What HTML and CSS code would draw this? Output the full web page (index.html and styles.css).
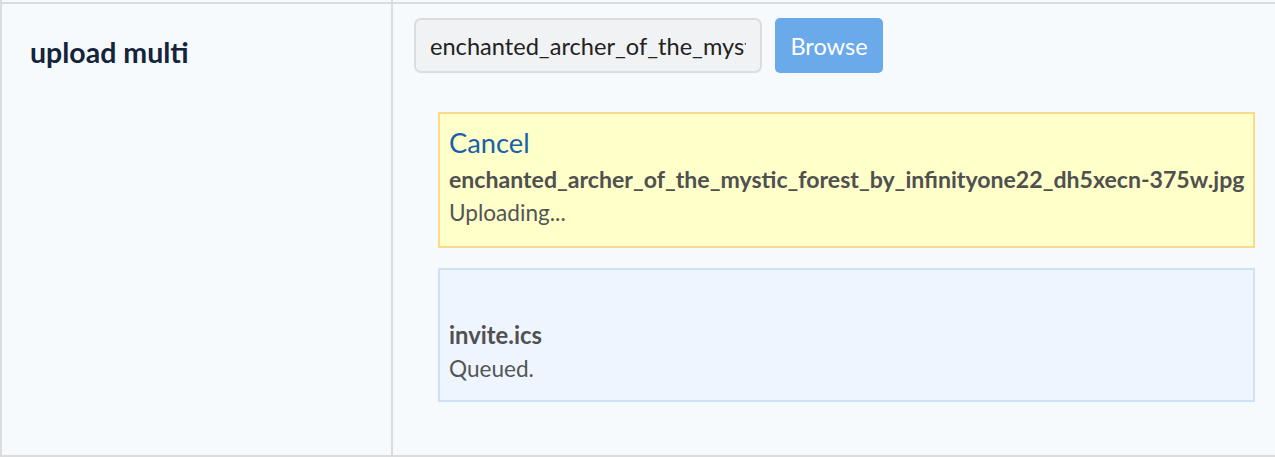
FILE: index.html
```html
<!DOCTYPE html>
<html lang="en">
<head>
<meta charset="utf-8">
<title>upload multi</title>
<link rel="stylesheet" href="styles.css">
</head>
<body>
<div class="table">
  <div class="row stub">
    <div class="cell label-cell"></div>
    <div class="cell value-cell"></div>
  </div>
  <div class="row main">
    <div class="cell label-cell">
      <div class="label">upload multi</div>
    </div>
    <div class="cell value-cell">
      <div class="file-input">
        <input class="file-name" type="text" readonly value="enchanted_archer_of_the_mystic_forest_by_infinityone22_dh5xecn-375w.jpg">
        <button class="browse" type="button">Browse</button>
      </div>
      <div class="queue">
        <div class="upload-item uploading">
          <div class="item-action"><a class="cancel" href="#">Cancel</a></div>
          <div class="item-name">enchanted_archer_of_the_mystic_forest_by_infinityone22_dh5xecn-375w.jpg</div>
          <div class="item-status">Uploading...</div>
        </div>
        <div class="upload-item queued">
          <div class="item-action"></div>
          <div class="item-name">invite.ics</div>
          <div class="item-status">Queued.</div>
        </div>
      </div>
    </div>
  </div>
</div>
</body>
</html>
```

FILE: styles.css
```css
html, body {
  margin: 0;
  padding: 0;
  background: #f7fafd;
}

body {
  font-family: "Lato", "Segoe UI", "Open Sans", sans-serif;
  color: #222;
  overflow: hidden;
}

.table {
  border-left: 2px solid #dcdcdc;
  background: #f7fafd;
}

.row {
  display: grid;
  grid-template-columns: 391px 1fr;
}

.stub {
  height: 2px;
}

.main {
  border-top: 2px solid #dcdcdc;
  border-bottom: 2px solid #dcdcdc;
  height: 455px;
  box-sizing: border-box;
}

.label-cell {
  border-right: 2px solid #dcdcdc;
}

.label {
  padding: 31px 0 0 28px;
  font-size: 28.5px;
  font-weight: 700;
  color: #14243a;
  line-height: 1.2;
}

.value-cell {
  padding: 14px 0 0 21px;
  min-width: 0;
}

.file-input {
  display: flex;
  align-items: stretch;
  gap: 13px;
  height: 55px;
}

.file-name {
  -webkit-appearance: none;
  appearance: none;
  margin: 0;
  width: 348px;
  height: 55px;
  box-sizing: border-box;
  border: 2px solid #dcdcdc;
  border-radius: 7px;
  background: #f1f2f4;
  padding: 1px 14px 0;
  font-family: inherit;
  font-size: 23.6px;
  color: #222;
  outline: none;
}

.browse {
  border: none;
  border-radius: 5px;
  background: #6aaaeb;
  color: #fff;
  font-family: inherit;
  font-size: 23.5px;
  padding: 1px 0 0;
  width: 108px;
}

.queue {
  margin: 39px 0 0 24px;
  display: flex;
  flex-direction: column;
  gap: 20px;
  width: 817px;
}

.upload-item {
  border: 2px solid;
  padding: 11px 9px 0;
  color: #555;
  box-sizing: border-box;
}

.uploading {
  background: #ffffca;
  border-color: #fdd98a;
  height: 136px;
}

.queued {
  background: #eff5fe;
  border-color: #cfe1f3;
  height: 134px;
}

.item-action {
  height: 36px;
  font-size: 27.3px;
  line-height: 36px;
}

.cancel {
  color: #1a5fa9;
  text-decoration: none;
}

.item-name {
  font-size: 23.1px;
  font-weight: 700;
  line-height: 36px;
  color: #505050;
  white-space: nowrap;
}

.queued .item-name {
  font-size: 23.8px;
}

.item-status {
  font-size: 22.6px;
  line-height: 31px;
  color: #555;
}
```
